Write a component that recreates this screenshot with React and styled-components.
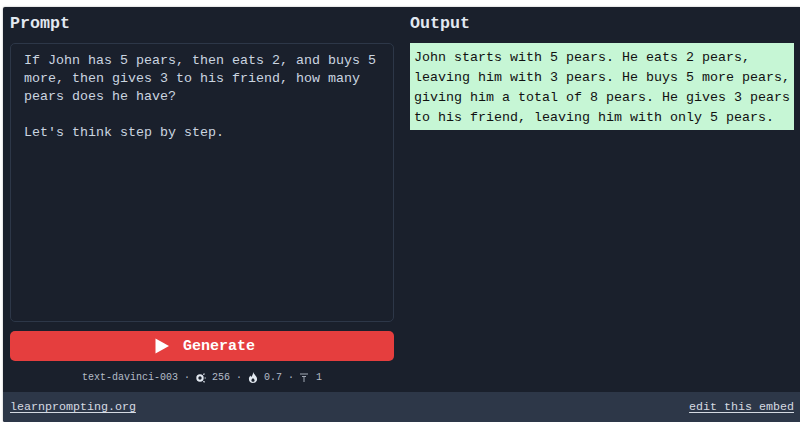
import styled, { createGlobalStyle } from "styled-components";

const Global = createGlobalStyle`
    html, body {
        margin: 0;
        padding: 0;
        background: #ffffff;
        overflow: hidden;
    }
    body {
        font-family: "Liberation Mono", monospace;
    }
`

const Embed = styled.div`
    margin: 7px 0 0 3px;
    width: 797px;
    height: 415px;
    display: flex;
    flex-direction: column;
    background-color: #1a202c;
    border-radius: 2px 0 0 2px;
    box-shadow: 0 0 2px rgba(0, 0, 0, 0.35);
    overflow: hidden;
`

const Columns = styled.main`
    flex: 1;
    display: grid;
    grid-template-columns: 384px 384px;
    column-gap: 16px;
    padding: 0 6px 0 7px;
`

const Column = styled.section`
    display: flex;
    flex-direction: column;
`

const Heading = styled.h2`
    margin: 0;
    height: 36px;
    line-height: 34px;
    font-size: 16.67px;
    font-weight: 700;
    color: #e2e8f0;
`

const PromptBox = styled.textarea`
    box-sizing: border-box;
    width: 384px;
    height: 279px;
    margin: 0;
    padding: 8px 13px;
    resize: none;
    outline: none;
    background: transparent;
    border: 1px solid #2d3748;
    border-radius: 5px;
    font-family: inherit;
    font-size: 13.33px;
    line-height: 18px;
    color: #cbd5e0;
`

const GenerateButton = styled.button`
    width: 384px;
    height: 30px;
    margin-top: 9px;
    padding: 0 0 0 6px;
    display: flex;
    align-items: center;
    justify-content: center;
    gap: 14px;
    border: 0;
    border-radius: 5px;
    background-color: #e53e3e;
    color: #ffffff;
    font-family: inherit;
    font-size: 15px;
    font-weight: 700;
`

const Meta = styled.div`
    height: 31px;
    padding-top: 2px;
    box-sizing: border-box;
    display: flex;
    align-items: center;
    justify-content: center;
    gap: 6px;
    font-size: 10px;
    color: #b4bcc8;
    svg {
        display: block;
    }
`

const OutputBox = styled.div`
    box-sizing: border-box;
    width: 384px;
    height: 87px;
    padding: 5px 4px 0 4px;
    background-color: #c6f6d5;
    color: #111111;
    font-size: 13.33px;
    line-height: 20px;
`

const Footer = styled.footer`
    height: 30px;
    flex-shrink: 0;
    display: flex;
    align-items: center;
    justify-content: space-between;
    padding: 0 6px 0 7px;
    background-color: #2d3748;
    font-size: 11.67px;
`

const FooterLink = styled.a`
    color: #d5dae2;
    text-decoration: underline;
    text-underline-offset: 2px;
`

function PlayIcon() {
    return (
        <svg width="14" height="16" viewBox="0 0 14 16">
            <path d="M0.5 0.5 L14 8 L0.5 15.5 Z" fill="#ffffff" />
        </svg>
    );
}

function TokensIcon() {
    return (
        <svg width="10" height="10" viewBox="0 0 10 10" fill="none" stroke="#e2e8f0">
            <circle cx="4" cy="5" r="2.7" strokeWidth="2" />
            <path d="M7.2 1.6 L8.6 0.8 M8.6 5 L9.8 5 M7.4 8.2 L8.6 9.2" strokeWidth="1.2" />
        </svg>
    );
}

function FlameIcon() {
    return (
        <svg width="10" height="11" viewBox="0 0 10 11">
            <path d="M5.1 0 C5.5 2 9.1 4 9.1 7 C9.1 9.4 7.3 11 5 11 C2.7 11 0.9 9.4 0.9 7 C0.9 5.4 1.7 4.4 2.5 3.6 L3.1 5 C4.1 4 5.1 2.4 5.1 0 Z M5 6 C4.1 7 3.4 7.6 3.4 8.4 C3.4 9.3 4.1 9.8 5 9.8 C5.9 9.8 6.6 9.3 6.6 8.4 C6.6 7.6 5.9 7 5 6 Z" fill="#e2e8f0" fillRule="evenodd" />
        </svg>
    );
}

function TopPIcon() {
    return (
        <svg width="10" height="9" viewBox="0 0 10 9" fill="none" stroke="#a0a8b4" strokeWidth="1">
            <path d="M0 1 L8 1 M2 3.5 L6 3.5 M4 3.5 L4 9" />
        </svg>
    );
}

const prompt = `If John has 5 pears, then eats 2, and buys 5 more, then gives 3 to his friend, how many pears does he have?

Let's think step by step.`;

const output = "John starts with 5 pears. He eats 2 pears, leaving him with 3 pears. He buys 5 more pears, giving him a total of 8 pears. He gives 3 pears to his friend, leaving him with only 5 pears.";

export default function App() {
    return (
        <>
            <Global />
            <Embed>
                <Columns>
                    <Column>
                        <Heading>Prompt</Heading>
                        <PromptBox value={prompt} readOnly />
                        <GenerateButton>
                            <PlayIcon />
                            Generate
                        </GenerateButton>
                        <Meta>
                            <span>text-davinci-003</span>
                            <span>·</span>
                            <TokensIcon />
                            <span>256</span>
                            <span>·</span>
                            <FlameIcon />
                            <span>0.7</span>
                            <span>·</span>
                            <TopPIcon />
                            <span>1</span>
                        </Meta>
                    </Column>
                    <Column>
                        <Heading>Output</Heading>
                        <OutputBox>{output}</OutputBox>
                    </Column>
                </Columns>
                <Footer>
                    <FooterLink href="#">learnprompting.org</FooterLink>
                    <FooterLink href="#">edit this embed</FooterLink>
                </Footer>
            </Embed>
        </>
    );
}
